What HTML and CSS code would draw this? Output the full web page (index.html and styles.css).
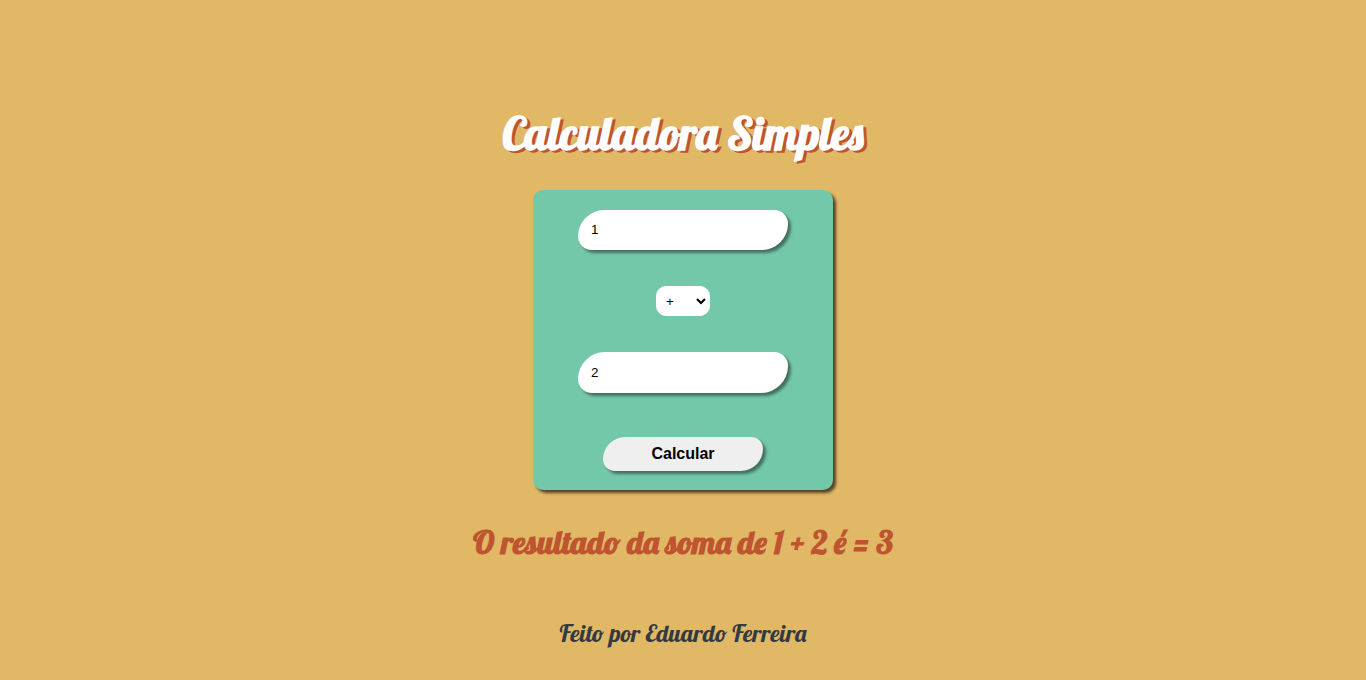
FILE: index.html
```html
<!DOCTYPE html>
<html lang="pt-BR">
<head>
<meta charset="UTF-8">
<title>Calculadora Simples</title>
<link rel="stylesheet" href="styles.css">
</head>
<body>
<h1 class="title">Calculadora Simples</h1>
<form class="calculator">
  <input class="number" type="text" value="1" aria-label="Primeiro número">
  <select class="operator" aria-label="Operação">
    <option>+</option>
    <option>-</option>
    <option>*</option>
    <option>/</option>
  </select>
  <input class="number second" type="text" value="2" aria-label="Segundo número">
  <button class="submit" type="button">Calcular</button>
</form>
<h2 class="result">O resultado da soma de 1 + 2 é = 3</h2>
<footer class="credit">Feito por Eduardo Ferreira</footer>
</body>
</html>
```

FILE: styles.css
```css
* {
  box-sizing: border-box;
}

body {
  margin: 0;
  height: 680px;
  padding-top: 103px;
  display: flex;
  flex-direction: column;
  align-items: center;
  overflow: hidden;
  background: #e1b866;
  font-family: Lobster, "Liberation Serif", serif;
  white-space: nowrap;
}

.title {
  margin: 0 0 27px;
  font-size: 45px;
  line-height: 60px;
  color: #fff;
  text-shadow: 3px 2px 0 #bf5530;
}

.calculator {
  width: 300px;
  height: 300px;
  padding-top: 20px;
  display: flex;
  flex-direction: column;
  align-items: center;
  background: #74c8aa;
  border-radius: 10px;
  box-shadow: 3px 3px 3px #000000a0;
}

.number {
  width: 210px;
  height: 40px;
  padding: 0 13px 1px;
  border: none;
  border-radius: 27px 14px;
  background: #fff;
  box-shadow: 3px 3px 3px #00000070;
  color: #000;
  font: 13.333px "Liberation Sans", sans-serif;
}

.second {
  height: 41px;
}

.operator {
  width: 54px;
  height: 30px;
  margin: 36px 0;
  padding: 0 0 0 5px;
  border: 1px solid #fff;
  border-radius: 10px;
  background: #fff;
  color: #000;
  font: 13.333px "Liberation Sans", sans-serif;
}

.submit {
  width: 160px;
  height: 34px;
  margin-top: 44px;
  padding: 0;
  border: none;
  border-radius: 23px 12px;
  background: #efefef;
  box-shadow: 3px 3px 3px #00000070;
  color: #000;
  font: bold 16px "Liberation Sans", sans-serif;
}

.result {
  margin: 32px 0 0;
  font-size: 32px;
  line-height: 40px;
  color: #bf5530;
}

.credit {
  margin-top: 56px;
  font-size: 24px;
  line-height: 30px;
  color: #333a42;
}
```
